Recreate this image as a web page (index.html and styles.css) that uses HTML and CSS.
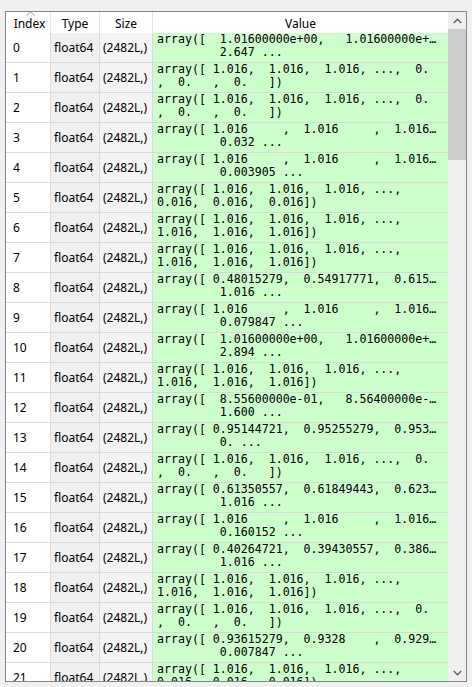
FILE: index.html
```html
<!DOCTYPE html>
<html>
<head>
<meta charset="utf-8">
<link rel="stylesheet" href="styles.css">
</head>
<body>
<div class="frame">
  <div class="grid">
    <div class="row head">
      <div class="cell hidx"><span class="sort"><svg width="9" height="5" viewBox="0 0 9 5"><path d="M0.5 4.5 L4.5 0.8 L8.5 4.5" fill="none" stroke="#9a9a9a" stroke-width="1"/></svg></span>Index</div>
      <div class="cell">Type</div>
      <div class="cell">Size</div>
      <div class="cell last">Value</div>
    </div>
    <div class="row"><div class="cell idx">0</div><div class="cell typ">float64</div><div class="cell siz">(2482L,)</div><div class="cell val"><span>array([  1.01600000e+00,   1.01600000e+…</span><span>         2.647 ...</span></div></div>
    <div class="row"><div class="cell idx">1</div><div class="cell typ">float64</div><div class="cell siz">(2482L,)</div><div class="cell val"><span>array([ 1.016,  1.016,  1.016, ...,  0.</span><span>,  0.   ,  0.   ])</span></div></div>
    <div class="row"><div class="cell idx">2</div><div class="cell typ">float64</div><div class="cell siz">(2482L,)</div><div class="cell val"><span>array([ 1.016,  1.016,  1.016, ...,  0.</span><span>,  0.   ,  0.   ])</span></div></div>
    <div class="row"><div class="cell idx">3</div><div class="cell typ">float64</div><div class="cell siz">(2482L,)</div><div class="cell val"><span>array([ 1.016     ,  1.016     ,  1.016…</span><span>         0.032 ...</span></div></div>
    <div class="row"><div class="cell idx">4</div><div class="cell typ">float64</div><div class="cell siz">(2482L,)</div><div class="cell val"><span>array([ 1.016     ,  1.016     ,  1.016…</span><span>         0.003905 ...</span></div></div>
    <div class="row"><div class="cell idx">5</div><div class="cell typ">float64</div><div class="cell siz">(2482L,)</div><div class="cell val"><span>array([ 1.016,  1.016,  1.016, ...,</span><span>0.016,  0.016,  0.016])</span></div></div>
    <div class="row"><div class="cell idx">6</div><div class="cell typ">float64</div><div class="cell siz">(2482L,)</div><div class="cell val"><span>array([ 1.016,  1.016,  1.016, ...,</span><span>1.016,  1.016,  1.016])</span></div></div>
    <div class="row"><div class="cell idx">7</div><div class="cell typ">float64</div><div class="cell siz">(2482L,)</div><div class="cell val"><span>array([ 1.016,  1.016,  1.016, ...,</span><span>1.016,  1.016,  1.016])</span></div></div>
    <div class="row"><div class="cell idx">8</div><div class="cell typ">float64</div><div class="cell siz">(2482L,)</div><div class="cell val"><span>array([ 0.48015279,  0.54917771,  0.615…</span><span>         1.016 ...</span></div></div>
    <div class="row"><div class="cell idx">9</div><div class="cell typ">float64</div><div class="cell siz">(2482L,)</div><div class="cell val"><span>array([ 1.016     ,  1.016     ,  1.016…</span><span>         0.079847 ...</span></div></div>
    <div class="row"><div class="cell idx">10</div><div class="cell typ">float64</div><div class="cell siz">(2482L,)</div><div class="cell val"><span>array([  1.01600000e+00,   1.01600000e+…</span><span>         2.894 ...</span></div></div>
    <div class="row"><div class="cell idx">11</div><div class="cell typ">float64</div><div class="cell siz">(2482L,)</div><div class="cell val"><span>array([ 1.016,  1.016,  1.016, ...,</span><span>1.016,  1.016,  1.016])</span></div></div>
    <div class="row"><div class="cell idx">12</div><div class="cell typ">float64</div><div class="cell siz">(2482L,)</div><div class="cell val"><span>array([  8.55600000e-01,   8.56400000e-…</span><span>         1.600 ...</span></div></div>
    <div class="row"><div class="cell idx">13</div><div class="cell typ">float64</div><div class="cell siz">(2482L,)</div><div class="cell val"><span>array([ 0.95144721,  0.95255279,  0.953…</span><span>         0. ...</span></div></div>
    <div class="row"><div class="cell idx">14</div><div class="cell typ">float64</div><div class="cell siz">(2482L,)</div><div class="cell val"><span>array([ 1.016,  1.016,  1.016, ...,  0.</span><span>,  0.   ,  0.   ])</span></div></div>
    <div class="row"><div class="cell idx">15</div><div class="cell typ">float64</div><div class="cell siz">(2482L,)</div><div class="cell val"><span>array([ 0.61350557,  0.61849443,  0.623…</span><span>         1.016 ...</span></div></div>
    <div class="row"><div class="cell idx">16</div><div class="cell typ">float64</div><div class="cell siz">(2482L,)</div><div class="cell val"><span>array([ 1.016     ,  1.016     ,  1.016…</span><span>         0.160152 ...</span></div></div>
    <div class="row"><div class="cell idx">17</div><div class="cell typ">float64</div><div class="cell siz">(2482L,)</div><div class="cell val"><span>array([ 0.40264721,  0.39430557,  0.386…</span><span>         1.016 ...</span></div></div>
    <div class="row"><div class="cell idx">18</div><div class="cell typ">float64</div><div class="cell siz">(2482L,)</div><div class="cell val"><span>array([ 1.016,  1.016,  1.016, ...,</span><span>1.016,  1.016,  1.016])</span></div></div>
    <div class="row"><div class="cell idx">19</div><div class="cell typ">float64</div><div class="cell siz">(2482L,)</div><div class="cell val"><span>array([ 1.016,  1.016,  1.016, ...,  0.</span><span>,  0.   ,  0.   ])</span></div></div>
    <div class="row"><div class="cell idx">20</div><div class="cell typ">float64</div><div class="cell siz">(2482L,)</div><div class="cell val"><span>array([ 0.93615279,  0.9328    ,  0.929…</span><span>         0.007847 ...</span></div></div>
    <div class="row"><div class="cell idx">21</div><div class="cell typ">float64</div><div class="cell siz">(2482L,)</div><div class="cell val"><span>array([ 1.016,  1.016,  1.016, ...,</span><span>0.016,  0.016,  0.016])</span></div></div>
  </div>
  <div class="scrollbar">
    <div class="arrow"><svg width="9" height="6" viewBox="0 0 9 6"><path d="M0.8 5 L4.5 1.3 L8.2 5" fill="none" stroke="#606060" stroke-width="1.4"/></svg></div>
    <div class="track"><div class="thumb"></div></div>
    <div class="arrow"><svg width="9" height="6" viewBox="0 0 9 6"><path d="M0.8 1 L4.5 4.7 L8.2 1" fill="none" stroke="#606060" stroke-width="1.4"/></svg></div>
  </div>
</div>
</body>
</html>
```
FILE: styles.css
```css
html, body {
  margin: 0;
  padding: 0;
  background: #f0f0f0;
}
body {
  padding: 11px 0 0 5px;
  font-family: "Noto Sans", "Open Sans", sans-serif;
  font-size: 12px;
  color: #000;
}
.frame {
  width: 460px;
  height: 669px;
  border: 1px solid #828790;
  background: #fff;
  display: flex;
  overflow: hidden;
}
.grid {
  flex: 1;
  overflow: hidden;
  display: flex;
  flex-direction: column;
}
.row {
  display: grid;
  grid-template-columns: 45px 49px 53px 1fr;
  height: 29px;
  border-bottom: 1px solid #dadada;
  flex: none;
}
.row.head {
  height: 21px;
  border-bottom: none;
  background: #fff;
}
.cell {
  border-right: 1px solid #dadada;
  overflow: hidden;
  white-space: nowrap;
  display: flex;
  align-items: center;
}
.head .cell {
  justify-content: center;
  border-right: 1px solid #e5e5e5;
  line-height: 21px;
  padding-top: 1px;
  position: relative;
}
.head .cell.hidx {
  padding-left: 3px;
}
.head .cell.last {
  border-right: none;
}
.sort {
  position: absolute;
  top: -1px;
  left: 50%;
  margin-left: -2px;
  line-height: 0;
}
.idx {
  background: #fff;
  padding-left: 7px;
}
.typ {
  background: #f0f0f0;
  padding-left: 3px;
}
.siz {
  background: #f4f4f4;
  padding-left: 3px;
}
.val {
  background: #ccffcc;
  border-right: none;
  padding-left: 4px;
  display: flex;
  flex-direction: column;
  align-items: flex-start;
  justify-content: flex-start;
  font-family: "DejaVu Sans Mono", monospace;
  font-size: 11.6px;
  line-height: 13px;
  white-space: pre;
}
.val span {
  display: block;
}
.scrollbar {
  width: 18px;
  flex: none;
  background: #f0f0f0;
  display: flex;
  flex-direction: column;
}
.arrow {
  height: 17px;
  display: flex;
  align-items: center;
  justify-content: center;
}
.track {
  flex: 1;
}
.thumb {
  margin-top: 0;
  height: 131px;
  background: #cdcdcd;
}
```
